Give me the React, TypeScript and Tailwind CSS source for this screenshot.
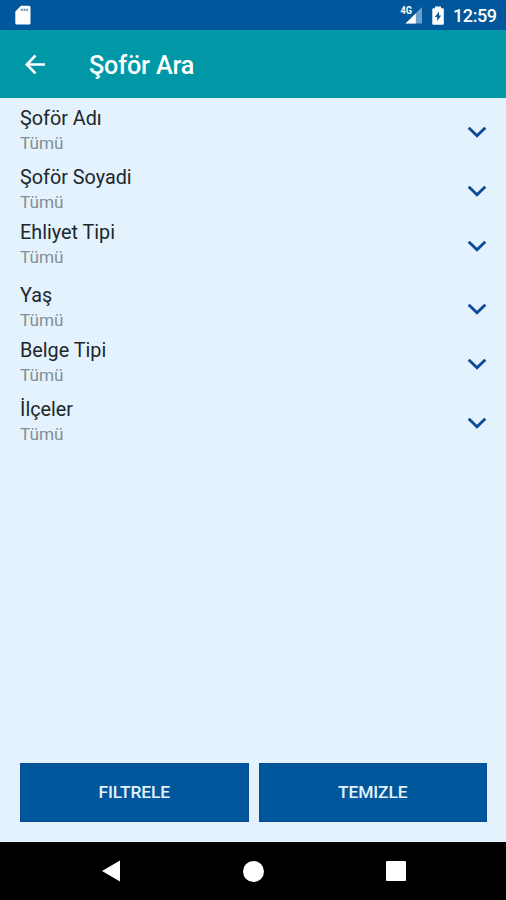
type Filter = { label: string; value: string; gap: string };

const filters: Filter[] = [
  { label: "Şoför Adı", value: "Tümü", gap: "mt-[8px]" },
  { label: "Şoför Soyadi", value: "Tümü", gap: "mt-[9px]" },
  { label: "Ehliyet Tipi", value: "Tümü", gap: "mt-[5px]" },
  { label: "Yaş", value: "Tümü", gap: "mt-[13px]" },
  { label: "Belge Tipi", value: "Tümü", gap: "mt-[5px]" },
  { label: "İlçeler", value: "Tümü", gap: "mt-[9px]" },
];

function StatusBar() {
  return (
    <div className="flex h-[30px] items-center bg-[#01579b] pr-[9px] pl-[15px] text-white">
      <svg className="h-[20px] w-[16px]" viewBox="0 0 16 20">
        <path fill="#fff" d="M6 .8h8q1.500 0 1.500 1.500v15.700q0 1.500-1.500 1.500H1.800Q.3 19.500.3 18V6.500z" />
        <path fill="#6f93be" d="M6 3.800h1.800V6H6zM8.600 3.800h1.800V6H8.600zM11.200 3.800H13V6h-1.800z" />
      </svg>
      <div className="flex-1" />
      <svg className="h-[20px] w-[22px]" viewBox="0 0 22 20">
        <path fill="#6ea0c8" d="M22 2v16.500H5.500z" />
        <path fill="#fff" d="M15.800 8.500v10H5.500z" />
        <text x="0.500" y="9" fill="#fff" fontFamily="Roboto, sans-serif" fontSize="10" fontWeight="700" textLength="11.500" lengthAdjust="spacingAndGlyphs">4G</text>
      </svg>
      <svg className="ml-[10px] h-[19px] w-[12px]" viewBox="0 0 12 19">
        <path fill="#fff" d="M3 .5h6v1.700h1.800q1 0 1 1v14.500q0 1-1 1H1.300q-1 0-1-1V3.200q0-1 1-1H3z" />
        <path fill="#01579b" d="M7 5.500v4h2.200L5.200 15v-4H2.900z" />
      </svg>
      <span className="ml-[9px] w-[44px] pt-[2px] text-[18px] leading-[28px] font-medium tracking-[-0.4px] whitespace-nowrap">12:59</span>
    </div>
  );
}

function FilterRow({ label, value, gap }: Filter) {
  return (
    <button className={`mb-px flex h-[49px] w-full items-center justify-between text-left ${gap}`}>
      <span className="flex flex-col">
        <span className="text-[19.8px] leading-[25px] text-[#20272c]">{label}</span>
        <span className="text-[17.2px] leading-[24px] text-[#858e95]">{value}</span>
      </span>
      <svg className="mt-[3px] h-[13px] w-[20px]" viewBox="0 0 20 13">
        <path d="M1.700 1.800 10 9.800l8.300-8" fill="none" stroke="#0d4a97" strokeWidth="2.900" />
      </svg>
    </button>
  );
}

export default function App() {
  return (
    <div className="flex h-[900px] w-[506px] flex-col overflow-hidden bg-[#e3f2fd] font-[Roboto,sans-serif]">
      <StatusBar />
      <header className="flex h-[68px] items-center bg-[#0097a7] pl-[25px] text-white">
        <svg className="h-[20px] w-[20px]" viewBox="0 0 20 20">
          <path d="M20 10.500H2M10.500 1.500 1.700 10.500l8.800 9" fill="none" stroke="#fff" strokeWidth="2.600" />
        </svg>
        <h1 className="ml-[44px] pt-[2px] text-[25.200px] leading-[29px] font-medium tracking-[-0.150px]">Şoför Ara</h1>
      </header>
      <main className="flex flex-1 flex-col pr-[19px] pl-[20px]">
        {filters.map((f) => (
          <FilterRow key={f.label} {...f} />
        ))}
        <div className="mt-auto mb-[20px] flex gap-[10px] text-[17.400px] font-medium tracking-[-0.1px] text-[#e3f2fd]">
          <button className="h-[59px] flex-1 border border-[#0a4a94] bg-[#01579b]">FILTRELE</button>
          <button className="h-[59px] flex-1 border border-[#0a4a94] bg-[#01579b]">TEMIZLE</button>
        </div>
      </main>
      <nav className="flex h-[58px] items-center bg-black pl-[102px]">
        <svg className="h-[22px] w-[18px]" viewBox="0 0 18 22">
          <path d="M18 .5v21L0 11z" fill="#fff" />
        </svg>
        <div className="ml-[123px] size-[21px] rounded-full bg-white" />
        <div className="ml-[122px] size-[20px] rounded-[1px] bg-white" />
      </nav>
    </div>
  );
}
